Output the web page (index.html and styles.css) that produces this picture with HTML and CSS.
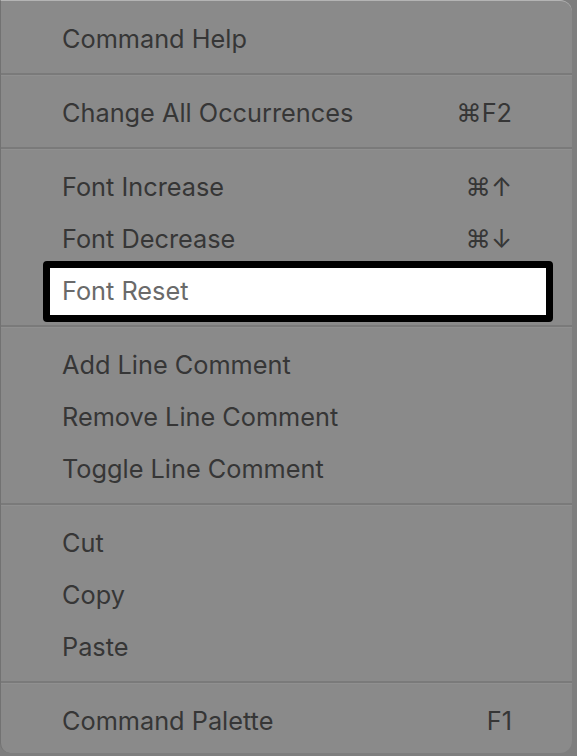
FILE: index.html
```html
<!DOCTYPE html>
<html>
<head>
<meta charset="utf-8">
<link rel="stylesheet" href="styles.css">
</head>
<body>
<div class="menu">
  <div class="item"><span class="label">Command Help</span></div>
  <div class="sep"></div>
  <div class="item"><span class="label">Change All Occurrences</span><span class="key">⌘F2</span></div>
  <div class="sep"></div>
  <div class="item"><span class="label">Font Increase</span><span class="key">⌘↑</span></div>
  <div class="item"><span class="label">Font Decrease</span><span class="key">⌘↓</span></div>
  <div class="item selected"><span class="label">Font Reset</span></div>
  <div class="sep"></div>
  <div class="item"><span class="label">Add Line Comment</span></div>
  <div class="item"><span class="label">Remove Line Comment</span></div>
  <div class="item"><span class="label">Toggle Line Comment</span></div>
  <div class="sep"></div>
  <div class="item"><span class="label">Cut</span></div>
  <div class="item"><span class="label">Copy</span></div>
  <div class="item"><span class="label">Paste</span></div>
  <div class="sep"></div>
  <div class="item"><span class="label">Command Palette</span><span class="key">F1</span></div>
</div>
</body>
</html>
```
FILE: styles.css
```css
html, body {
  margin: 0;
  padding: 0;
  background: #7e7e7e;
}
body {
  width: 577px;
  height: 756px;
  overflow: hidden;
  font-family: Inter, "Liberation Sans", sans-serif;
}
.menu {
  box-sizing: border-box;
  width: 572px;
  height: 753px;
  background: #8a8a8a;
  border-top: 1px solid #b4b4b4;
  border-left: 1px solid #727272;
  border-radius: 0 12px 12px 10px;
  padding-top: 11px;
  display: flex;
  flex-direction: column;
}
.item {
  position: relative;
  height: 52px;
  display: flex;
  align-items: center;
  justify-content: space-between;
  padding: 0 60px 0 61px;
  font-size: 25.3px;
  color: #363636;
}
.label, .key {
  position: relative;
  z-index: 1;
}
.key {
  font-family: Inter, "DejaVu Sans", sans-serif;
}
.sep {
  height: 2px;
  margin: 9px 0 10px;
  background: #7a7a7a;
  border-bottom: 1px solid #909090;
}
.selected {
  color: #6a6a6a;
}
.selected::before {
  content: "";
  position: absolute;
  left: 42px;
  right: 19px;
  top: -3px;
  bottom: -6px;
  border: 7px solid #000;
  border-radius: 4px;
  background: #fff;
  z-index: 0;
}
```
